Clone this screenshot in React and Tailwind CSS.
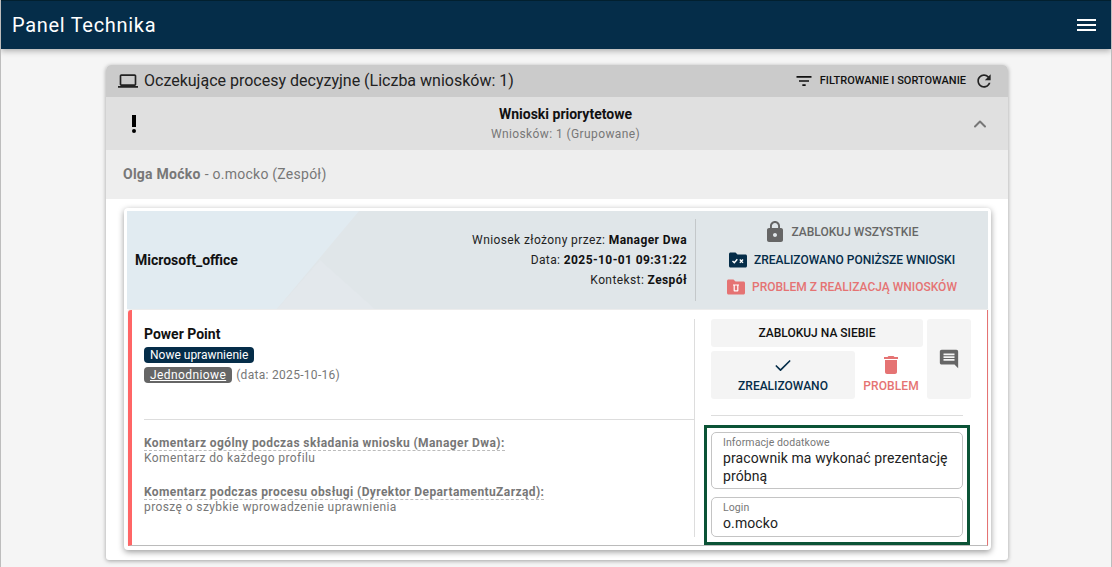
import { ChevronUp, Check } from 'lucide-react';

function FilterIcon() {
  return (
    <svg className="w-5 h-5 text-[#111]" viewBox="0 0 24 24" fill="currentColor">
      <path d="M10 18h4v-2h-4v2zM3 6v2h18V6H3zm3 7h12v-2H6v2z" />
    </svg>
  );
}

function RefreshIcon() {
  return (
    <svg className="w-5 h-5 text-[#222]" viewBox="0 0 24 24" fill="currentColor">
      <path d="M17.65 6.35C16.2 4.9 14.21 4 12 4c-4.42 0-7.99 3.58-7.99 8s3.57 8 7.99 8c3.73 0 6.84-2.55 7.73-6h-2.08c-.82 2.33-3.04 4-5.65 4-3.31 0-6-2.69-6-6s2.69-6 6-6c1.66 0 3.14.69 4.22 1.78L13 11h7V4l-2.35 2.35z" />
    </svg>
  );
}

function LaptopIcon() {
  return (
    <svg className="w-5 h-5 text-[#222]" viewBox="0 0 24 24" fill="currentColor">
      <path d="M20 18c1.1 0 1.99-.9 1.99-2L22 6c0-1.1-.9-2-2-2H4c-1.1 0-2 .9-2 2v10c0 1.1.9 2 2 2H0v2h24v-2h-4zM4 6h16v10H4V6z" />
    </svg>
  );
}

function LockIcon() {
  return (
    <svg className="w-6 h-6 text-[#666]" viewBox="0 0 24 24" fill="currentColor">
      <path d="M18 8h-1V6c0-2.76-2.24-5-5-5S7 3.24 7 6v2H6c-1.1 0-2 .9-2 2v10c0 1.1.9 2 2 2h12c1.1 0 2-.9 2-2V10c0-1.1-.9-2-2-2zm-6 9c-1.1 0-2-.9-2-2s.9-2 2-2 2 .9 2 2-.9 2-2 2zm3.1-9H8.9V6c0-1.71 1.39-3.1 3.1-3.1 1.71 0 3.1 1.39 3.1 3.1v2z" />
    </svg>
  );
}

function FolderCheckIcon() {
  return (
    <svg className="w-[18px] h-[18px] text-[#052d49]" viewBox="0 0 18 18">
      <path fill="currentColor" d="M1.5 1.5h5l2 2h8c.8 0 1.5.7 1.5 1.5v10c0 .8-.7 1.5-1.5 1.5h-15C.7 16.5 0 15.8 0 15V3c0-.8.7-1.5 1.5-1.5z" />
      <path fill="none" stroke="#fff" strokeWidth="1.4" d="M3.5 10l1.8 1.8 3-3.5M10.8 8.5l3.2 3.2M14 8.5l-3.2 3.2" />
    </svg>
  );
}

function FolderTrashIcon() {
  return (
    <svg className="w-[18px] h-[18px] text-[#e57373]" viewBox="0 0 18 18">
      <path fill="currentColor" d="M1.5 1.5h5l2 2h8c.8 0 1.5.7 1.5 1.5v10c0 .8-.7 1.5-1.5 1.5h-15C.7 16.5 0 15.8 0 15V3c0-.8.7-1.5 1.5-1.5z" />
      <path fill="#fff" d="M9 6.5h3v1h-.6v5c0 .6-.3.9-.9.9h-3c-.6 0-.9-.3-.9-.9v-5H6v-1zM7.8 7.500v4.800h2.400V7.500z" />
    </svg>
  );
}

function TrashIcon() {
  return (
    <svg className="w-6 h-6 text-[#e57373]" viewBox="0 0 24 24" fill="currentColor">
      <path d="M6 19c0 1.1.9 2 2 2h8c1.1 0 2-.9 2-2V7H6v12zM19 4h-3.5l-1-1h-5l-1 1H5v2h14V4z" />
    </svg>
  );
}

function CommentIcon() {
  return (
    <svg className="w-[22px] h-[22px] text-[#666]" viewBox="0 0 24 24" fill="currentColor">
      <path d="M21.99 4c0-1.1-.89-2-1.99-2H4c-1.1 0-2 .9-2 2v12c0 1.1.9 2 2 2h14l4 4-.01-18zM18 14H6v-2h12v2zm0-3H6V9h12v2zm0-3H6V6h12v2z" />
    </svg>
  );
}

function Comment({ title, text }) {
  return (
    <div className="mb-[20px] text-[12px] tracking-[0.4px] text-[#777]">
      <div className="leading-[15px]">
        <span className="font-bold border-b border-dashed border-[#bbb]">{title}</span>
      </div>
      <div className="leading-[14px]">{text}</div>
    </div>
  );
}

function Field({ label, children, className }) {
  return (
    <div className={`border border-[#c4c4c4] rounded-[5px] px-[11px] pt-[4px] ${className}`}>
      <div className="text-[10.5px] leading-[12px] text-[#777] tracking-[0.1px]">{label}</div>
      <div className="text-[14px] leading-[18px] tracking-[0.1px] text-[#222]">{children}</div>
    </div>
  );
}

export default function App() {
  return (
    <div className="h-[567px] overflow-hidden bg-[#f5f5f5] border-l border-r border-[#bdbdbd] font-['Roboto',sans-serif] text-[#222]">
      <header className="h-[49px] bg-[#052d49] border-t border-[#02202f] shadow-[0_2px_6px_rgba(0,0,0,0.3)] flex items-center justify-between pl-[11px] pr-[15px]">
        <h1 className="text-[20px] text-white tracking-[0.7px]">Panel Technika</h1>
        <div className="w-[19px] flex flex-col gap-[3px]">
          <span className="h-[2px] bg-white" />
          <span className="h-[2px] bg-white" />
          <span className="h-[2px] bg-white" />
        </div>
      </header>

      <main className="w-[902px] h-[495px] mt-4 ml-[105px] bg-white rounded-t-[5px] rounded-b-[3px] shadow-[0_1px_4px_rgba(0,0,0,0.35)] overflow-hidden">
        <div className="h-[32px] bg-[#cbcbcb] flex items-center pl-[12px] pr-[14px]">
          <LaptopIcon />
          <span className="ml-[6px] text-[16px] text-[#222]">Oczekujące procesy decyzyjne (Liczba wniosków: 1)</span>
          <div className="ml-auto flex items-center">
            <FilterIcon />
            <span className="ml-[6px] text-[11px] font-medium text-[#111]">FILTROWANIE I SORTOWANIE</span>
            <span className="ml-[8px]"><RefreshIcon /></span>
          </div>
        </div>

        <div className="h-[53px] bg-[#e0e0e0] flex items-center pl-[16px] pr-[18px]">
          <svg className="w-6 h-6 text-black" viewBox="0 0 24 24" fill="currentColor">
            <circle cx="12" cy="19" r="2" />
            <path d="M10 3h4v12h-4z" />
          </svg>
          <div className="flex-1 text-center pl-[15px] -mt-[1px]">
            <div className="text-[14px] leading-[20px] font-bold text-[#111]">Wnioski priorytetowe</div>
            <div className="text-[12px] leading-[16px] mt-[2px] tracking-[0.4px] text-[#777]">Wniosków: 1 (Grupowane)</div>
          </div>
          <ChevronUp className="w-[20px] h-[20px] text-[#777]" strokeWidth={2.4} />
        </div>

        <div className="h-[49px] bg-[#eeeeee] flex items-center pl-[17px] text-[14px] tracking-[0.25px] text-[#777]">
          <span className="font-bold">Olga Moćko</span>
          <span className="ml-1">- o.mocko (Zespół)</span>
        </div>

        <section className="w-[867px] h-[342px] mt-[9px] ml-[18px] bg-white rounded-[4px] p-[3px] shadow-[0_2px_6px_rgba(0,0,0,0.4)]">
          <div className="relative h-[98px] bg-[#e1ebf1] flex items-center overflow-hidden">
            <svg className="absolute inset-0 w-full h-full" viewBox="0 0 861 98" preserveAspectRatio="none">
              <polygon points="150,98 232,0 861,0 861,98" fill="#e0e6e9" />
              <polygon points="193,49 248,98 150,98" fill="#e3e8ec" />
            </svg>
            <div className="relative flex-1 flex items-center pl-[8px]">
              <span className="text-[14px] font-bold text-[#111]">Microsoft_office</span>
            </div>
            <div className="relative pr-[8px] text-right text-[12px] tracking-[0.4px] leading-[20px] text-[#222]">
              <div>Wniosek złożony przez: <b className="text-[#111]">Manager Dwa</b></div>
              <div>Data: <b className="text-[#111]">2025-10-01 09:31:22</b></div>
              <div>Kontekst: <b className="text-[#111]">Zespół</b></div>
            </div>
            <div className="relative w-[293px] h-[82px] border-l border-[#c4c8ca] flex flex-col items-center justify-center text-[12px] font-medium">
              <div className="h-[28px] -mt-[2px] pr-[3px] flex items-center gap-[5px] text-[#666]"><LockIcon /> ZABLOKUJ WSZYSTKIE</div>
              <div className="h-[28px] flex items-center gap-[7px] text-[#052d49]"><FolderCheckIcon /> ZREALIZOWANO PONIŻSZE WNIOSKI</div>
              <div className="h-[26px] flex items-center gap-[7px] text-[#e57373]"><FolderTrashIcon /> PROBLEM Z REALIZACJĄ WNIOSKÓW</div>
            </div>
          </div>

          <div className="h-[236px] mt-[1px] ml-[1px] border-l-[4px] border-[#ff6666] border-r border-r-[#e57373] border-b border-b-[#bbb] rounded-tl-[3px] shadow-[0_-1px_2px_rgba(0,0,0,0.1)] flex pt-[9px]">
            <div className="w-[551px] h-[218px] ml-[12px] border-r border-[#ddd] flex flex-col">
              <div className="h-[101px] border-b border-[#ddd]">
                <div className="text-[14px] leading-[20px] mt-[5px] font-bold text-[#111]">Power Point</div>
                <div className="mt-[2px] leading-[16px]">
                  <span className="inline-block bg-[#052d49] text-white text-[12px] leading-[16px] px-[6px] rounded-[4px]">Nowe uprawnienie</span>
                </div>
                <div className="mt-[4px] leading-[16px] text-[12px] tracking-[0.3px] text-[#777]">
                  <span className="inline-block bg-[#666] text-white underline leading-[16px] tracking-[0.4px] px-[6px] rounded-[4px]">Jednodniowe</span>
                  <span className="ml-1">(data: 2025-10-16)</span>
                </div>
              </div>
              <div className="pt-[16px] pr-2">
                <Comment title="Komentarz ogólny podczas składania wniosku (Manager Dwa):" text="Komentarz do każdego profilu" />
                <Comment title="Komentarz podczas procesu obsługi (Dyrektor DepartamentuZarząd):" text="proszę o szybkie wprowadzenie uprawnienia" />
              </div>
            </div>

            <div className="w-[266px] ml-[9px] flex flex-col">
              <div className="ml-[7px] flex gap-[4px] h-[80px]">
                <div className="w-[212px] shrink-0 flex flex-col gap-[4px]">
                  <button className="h-[28px] bg-[#f4f4f4] rounded-[3px] text-[12px] font-medium text-[#111]">ZABLOKUJ NA SIEBIE</button>
                  <div className="flex h-[48px]">
                    <button className="w-[144px] bg-[#f4f4f4] rounded-[3px] flex flex-col items-center justify-center text-[12px] font-medium text-[#052d49]">
                      <Check className="w-[20px] h-[20px]" strokeWidth={2} />
                      <span className="mt-[1px]">ZREALIZOWANO</span>
                    </button>
                    <button className="w-[68px] pl-[4px] pb-[3px] flex flex-col items-center justify-center text-[12px] font-medium tracking-[0.1px] text-[#e57373]">
                      <TrashIcon />
                      <span>PROBLEM</span>
                    </button>
                  </div>
                </div>
                <button className="w-[44px] shrink-0 bg-[#f4f4f4] rounded-[3px] flex items-center justify-center"><CommentIcon /></button>
              </div>
              <div className="ml-[7px] mr-[7px] mt-[16px] border-t border-[#ddd]" />
              <div className="mt-[9px] h-[121px] border-[3px] border-[#0b5336] px-[4px] pt-[4px]">
                <Field label="Informacje dodatkowe" className="h-[57px]">pracownik ma wykonać prezentację próbną</Field>
                <Field label="Login" className="h-[40px] mt-[8px]">o.mocko</Field>
              </div>
            </div>
          </div>
        </section>
      </main>
    </div>
  );
}
